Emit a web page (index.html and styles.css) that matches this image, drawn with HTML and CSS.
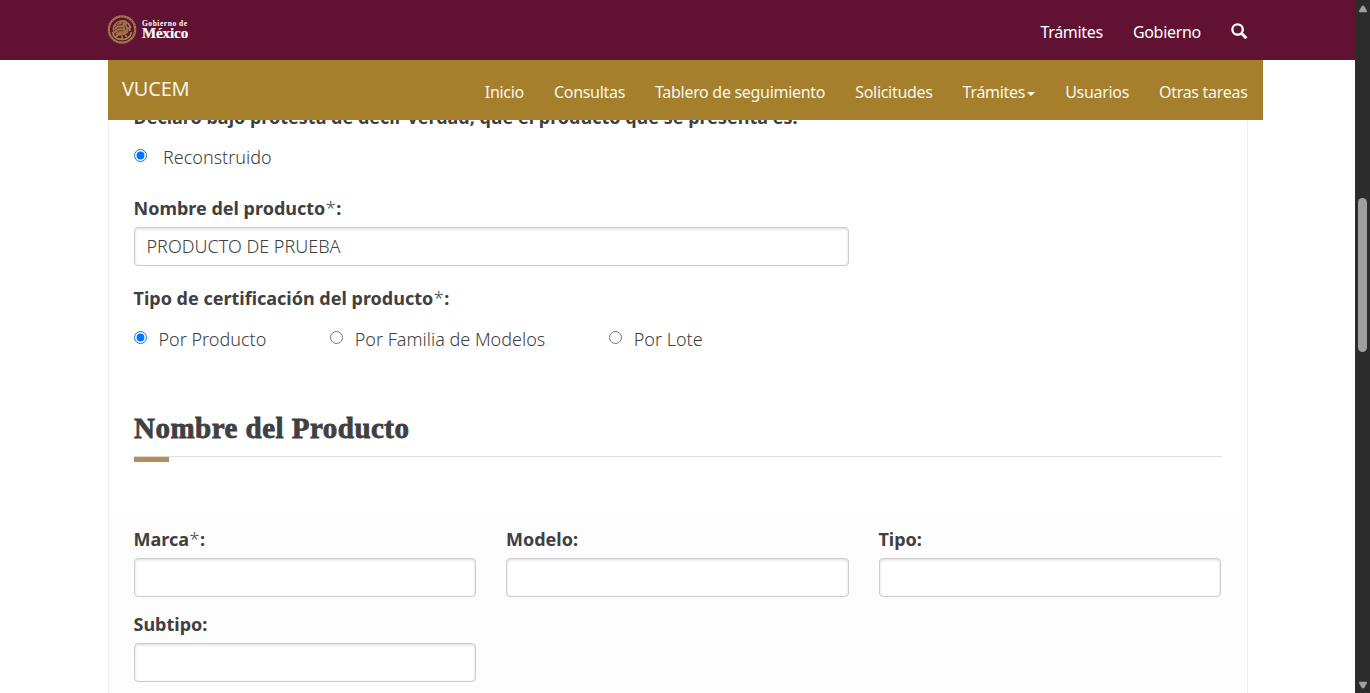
FILE: index.html
```html
<!DOCTYPE html>
<html lang="es">
<head>
<meta charset="utf-8">
<title>VUCEM</title>
<link rel="stylesheet" href="styles.css">
</head>
<body>
<div class="page">
  <header class="gov-bar">
    <a class="brand">
      <svg class="seal" width="30" height="30" viewBox="0 0 30 30" fill="none" stroke="#ab8350">
        <circle cx="15" cy="15.500" r="13.200" stroke-width="2.200" stroke="#a47b4b"/>
        <circle cx="15" cy="15.500" r="13.200" stroke-width="1.400" stroke="#7c4a3c" stroke-dasharray=".7 2.300"/>
        <path fill="#9b7045" stroke="none" d="M6 12c2-4 6-6 10-6 3 0 5 1 5 4l-2 1c3 2 3 5 2 8-4 3-9 4-13 1-2-2-3-5-2-8z"/>
        <path stroke="#65202f" stroke-width=".8" d="M7 14c3-3 6-4 9-3M7 17c3-3 6-4 9-3M8 20c3-3 5-4 8-3M12 8l-3 3M16 8l-2 3M18 12l1 4"/>
        <path d="M5.500 18c1 5 5 7.500 9.500 7.500s8.500-2.500 9.500-7.500M9 23l2-2M15 25v-3M20 23l-2-2M21 9l3 5M22 13l1 4" stroke-width="1.600"/>
      </svg>
      <span class="wordmark"><span class="word-small">Gobierno de</span><span class="word-large">México</span></span>
    </a>
    <nav class="gov-nav">
      <a>Trámites</a>
      <a>Gobierno</a>
      <svg class="search" width="17" height="17" viewBox="0 0 17 17" fill="none" stroke="#fff"><circle cx="6.600" cy="6.500" r="5.200" stroke-width="2.300"/><path d="M10.400 10.300l5 5" stroke-width="3"/></svg>
    </nav>
  </header>
  <div class="main-bar">
    <span class="site-name">VUCEM</span>
    <nav class="main-nav">
      <a>Inicio</a><a>Consultas</a><a>Tablero de seguimiento</a><a>Solicitudes</a><a>Trámites<i class="caret"></i></a><a>Usuarios</a><a>Otras tareas</a>
    </nav>
  </div>
  <main class="panel">
    <p class="label declare">Declaro bajo protesta de decir verdad, que el producto que se presenta es:</p>
    <label class="radio single"><input type="radio" name="estado" checked><span>Reconstruido</span></label>
    <label class="label product">Nombre del producto<em>*</em>:</label>
    <input class="field wide" type="text" value="PRODUCTO DE PRUEBA">
    <p class="label cert">Tipo de certificación del producto<em>*</em>:</p>
    <div class="radios">
      <label class="radio"><input type="radio" name="tipo" checked><span>Por Producto</span></label>
      <label class="radio"><input type="radio" name="tipo"><span>Por Familia de Modelos</span></label>
      <label class="radio"><input type="radio" name="tipo"><span>Por Lote</span></label>
    </div>
    <h3 class="section-title"><span>Nombre del Producto</span></h3>
    <div class="accent"></div>
    <div class="grid">
      <div><label class="label">Marca<em>*</em>:</label><input class="field" type="text"></div>
      <div><label class="label">Modelo:</label><input class="field" type="text"></div>
      <div><label class="label">Tipo:</label><input class="field" type="text"></div>
      <div><label class="label">Subtipo:</label><input class="field" type="text"></div>
    </div>
  </main>
</div>
<div class="scrollbar">
  <svg width="10" height="8" viewBox="0 0 10 8"><path d="M4 .8h2l3.200 5.400-.6 1H1.400l-.6-1z" fill="#9f9f9f"/></svg>
  <div class="thumb"></div>
  <svg class="down" width="10" height="8" viewBox="0 0 10 8"><path d="M4 7.200h2l3.200-5.400-.6-1H1.400l-.6 1z" fill="#9f9f9f"/></svg>
</div>
</body>
</html>
```
FILE: styles.css
```css
* { box-sizing: border-box; }
body { margin: 0; height: 693px; overflow: hidden; display: flex; font-family: "Noto Sans", sans-serif; font-size: 18px; font-weight: 300; color: #404041; background: #fff; }
.page { width: 1355px; height: 693px; overflow: hidden; }
.gov-bar { height: 60px; background: #611232; padding: 0 107px; display: flex; justify-content: space-between; color: #fff; }
.brand { display: flex; padding-top: 14px; }
.wordmark { display: flex; flex-direction: column; padding: 5px 0 0 5px; font-family: "Liberation Serif", serif; font-weight: 700; }
.word-small { font-size: 7.5px; line-height: 9px; letter-spacing: .53px; white-space: nowrap; }
.word-large { font-size: 15px; line-height: 11px; letter-spacing: -.1px; -webkit-text-stroke: .2px #fff; }
.gov-nav { display: flex; gap: 30px; font-size: 16px; font-weight: 400; line-height: 22px; padding-top: 21px; letter-spacing: -.3px; }
.search { margin-top: 2px; }
.main-bar { position: relative; z-index: 1; width: 1155px; height: 60px; margin-left: 108px; padding: 0 15.5px 0 14px; background: #a57f2c; color: #fff; display: flex; justify-content: space-between; }
.site-name { font-size: 20px; line-height: 28px; padding-top: 15px; font-weight: 400; letter-spacing: -.2px; color: #f7f2e8; }
.main-nav { display: flex; gap: 30px; font-size: 16px; font-weight: 400; line-height: 22px; padding-top: 21px; white-space: nowrap; letter-spacing: -.3px; color: #faf6ee; }
.caret { display: inline-block; border: 4px solid transparent; border-top-color: #fff; border-bottom: 0; vertical-align: 2px; margin-left: 2px; }
.panel { width: 1140px; height: 620px; margin: -27px 0 0 108px; padding: 11px 25px 0; border: 1px solid #eee; border-top: 0; background: linear-gradient(#fff 0 414px, #fdfdfd 436px); }
.label { display: block; margin: 0 0 0 -.5px; font-weight: 700; line-height: 26px; white-space: nowrap; }
.label em { font-style: normal; font-weight: 300; margin: 0 .7px 0 .4px; }
.radio { display: flex; line-height: 26px; white-space: nowrap; }
.radio input { width: 13px; height: 13px; margin: 5px 11.5px 0 0; }
.single { margin-top: 14px; }
.single input { margin-right: 16px; }
.product { margin-top: 25px; }
.field { display: block; width: 100%; height: 39px; margin-top: 6px; padding: 0 12px 2px 11.5px; border: 1px solid #ccc; border-radius: 4px; box-shadow: inset 0 1px 3px rgba(0,0,0,.15); background: #fff; font: inherit; color: #404041; outline: 0; }
.wide { width: 715px; }
.cert { margin-top: 19px; }
.radios { display: flex; gap: 64px; margin-top: 15px; }
.section-title { margin: 54px 0 0; height: 51px; line-height: 45px; border-bottom: 1px solid #ddd; font-family: "Liberation Serif", serif; font-size: 29px; font-weight: 700; letter-spacing: .48px; }
.section-title span { -webkit-text-stroke: .8px #404041; }
.accent { width: 35px; height: 5px; background: #b38e5d; }
.grid { display: grid; grid-template-columns: repeat(3, 342.3px); column-gap: 30.2px; row-gap: 14px; margin-top: 64px; }
.scrollbar { width: 15px; background: #2c2c2c; display: flex; flex-direction: column; align-items: center; padding-top: 5px; }
.thumb { width: 9px; height: 154px; border-radius: 5px; background: #9f9f9f; margin-top: 185px; }
.down { margin-top: 329px; }
```
